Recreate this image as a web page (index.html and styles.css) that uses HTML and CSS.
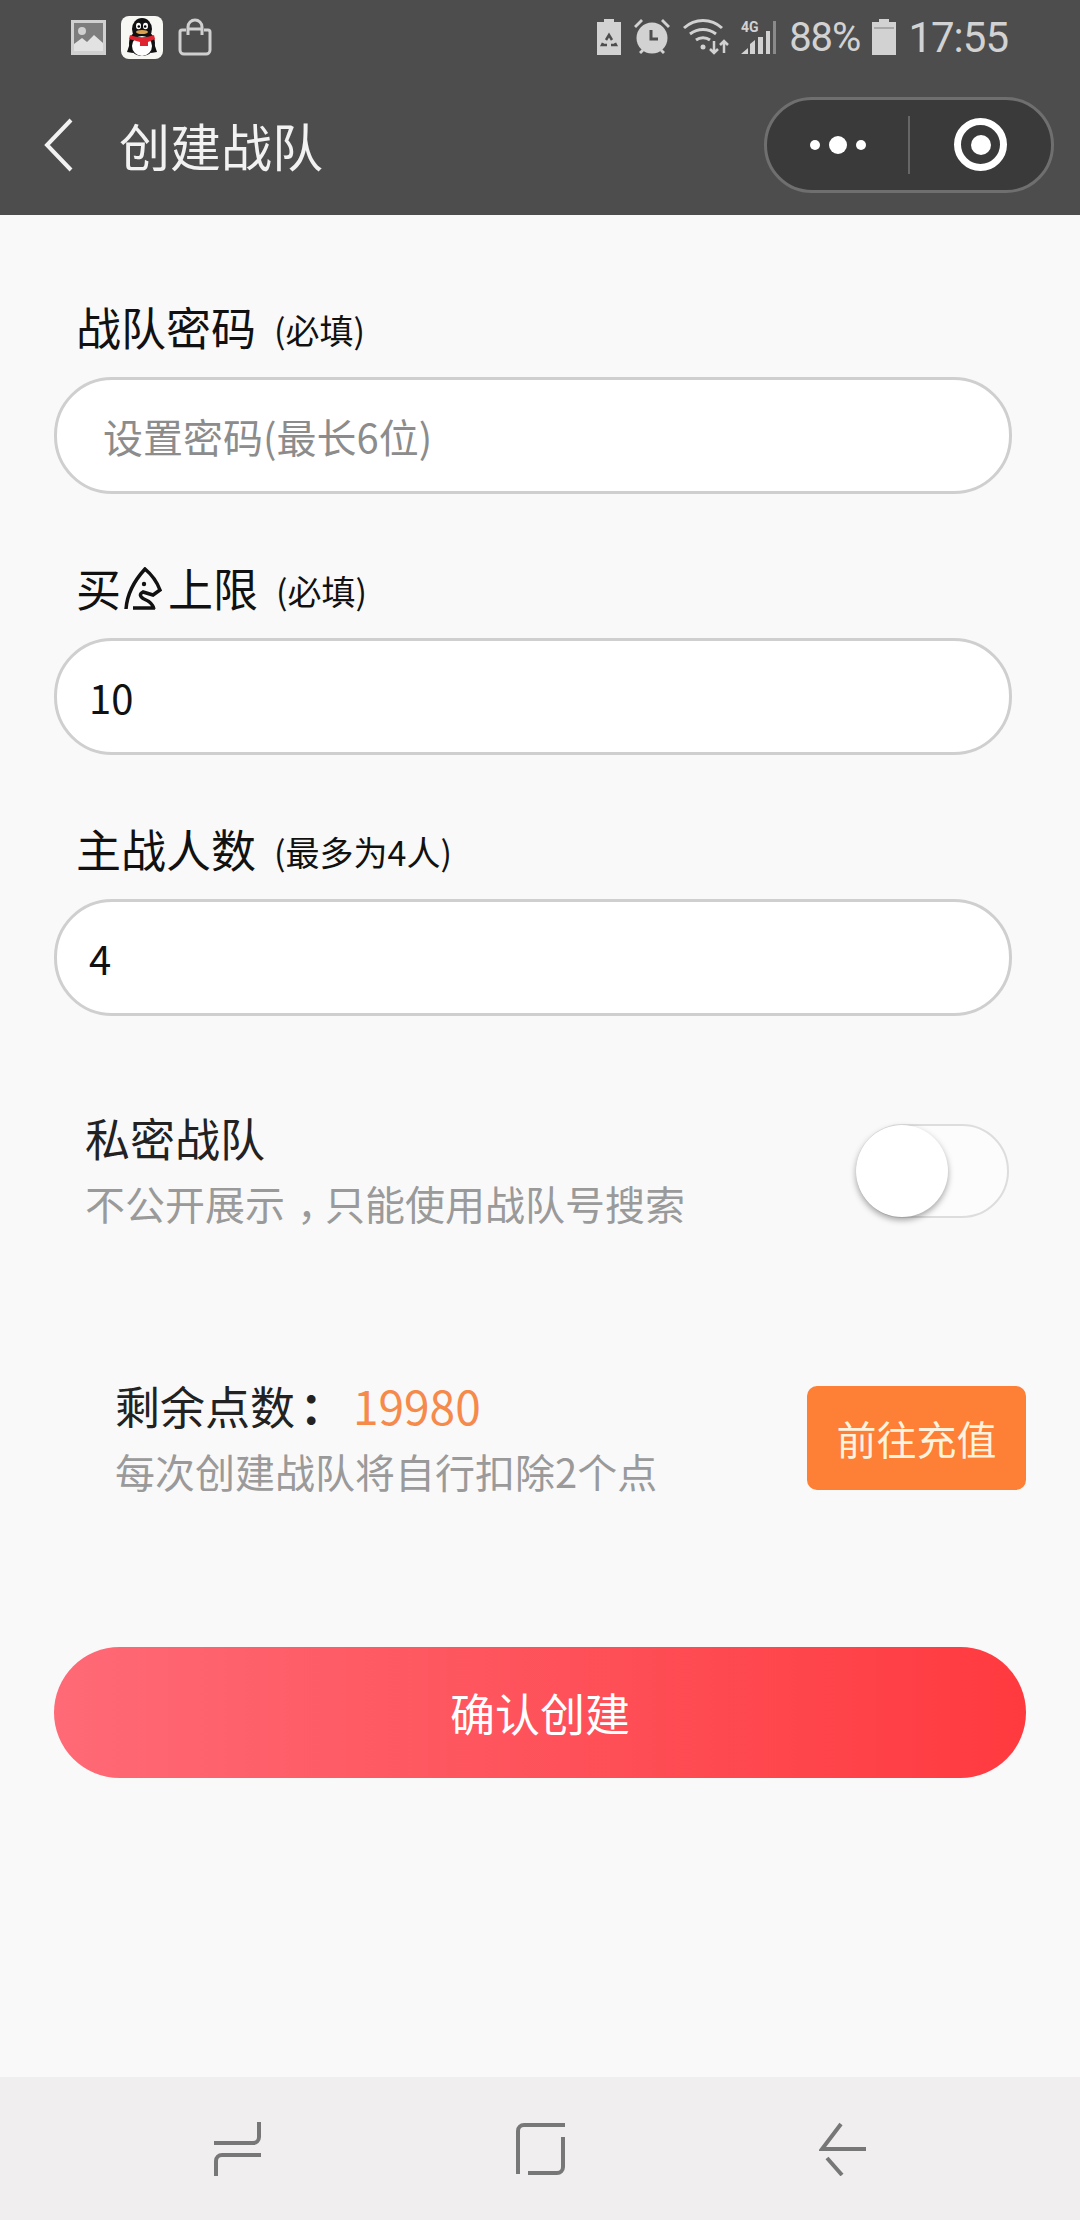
FILE: index.html
```html
<!DOCTYPE html>
<html lang="zh-CN">
<head>
    <meta charset="UTF-8">
    <meta name="viewport" content="width=device-width, initial-scale=1.0">
    <title>创建战队</title>
    <link rel="stylesheet" href="styles.css">
</head>
<body>
    <div class="page">
        <!-- Top bar -->
        <div class="topbar">
            <div class="status">
                <div class="status-left">
                    <svg width="35" height="35" viewBox="0 0 35 35"><path fill="#d0d0d0" d="M0 0h35v35H0z"/><path fill="#7d7d7d" d="M3 3h29v24H3z"/><circle cx="11" cy="11" r="4" fill="#d0d0d0"/><path fill="#e2e2e2" d="M3 31v-7l8-6 5 4 7-7 9 8v8z"/></svg>
                    <svg width="42" height="43" viewBox="0 0 42 43">
                        <rect width="42" height="43" rx="8" fill="#f7f7f3"/>
                        <ellipse cx="21" cy="27" rx="13" ry="13" fill="#111"/>
                        <path fill="#111" d="M6 36l4-12 2 13zM36 36l-4-12-2 13z"/>
                        <ellipse cx="21" cy="13" rx="10" ry="11" fill="#111"/>
                        <ellipse cx="21" cy="30" rx="10" ry="10" fill="#fff"/>
                        <ellipse cx="17.500" cy="10" rx="2.500" ry="3.300" fill="#fff"/>
                        <ellipse cx="24.500" cy="10" rx="2.500" ry="3.300" fill="#fff"/>
                        <circle cx="17.800" cy="10.500" r="1.300" fill="#000"/>
                        <circle cx="24.200" cy="10.500" r="1.300" fill="#000"/>
                        <ellipse cx="21" cy="16" rx="6" ry="2" fill="#d9a050"/>
                        <path fill="#e0242f" d="M9 19c8 3 16 3 24 0l1 4-7 3v4h-8v-4l-11-3z"/>
                    </svg>
                    <svg width="34" height="38" viewBox="0 0 34 38" fill="none" stroke="#cfcfcf" stroke-width="3"><path d="M8 12H4a2 2 0 0 0-2 2v18a4 4 0 0 0 4 4h22a4 4 0 0 0 4-4V14a2 2 0 0 0-2-2h-4"/><path d="M10 17V9a7 7 0 0 1 14 0v8M10 11h14"/></svg>
                </div>
                <div class="status-right">
                    <svg width="24" height="36" viewBox="0 0 24 36"><path fill="#d2d2d2" d="M7 0h10v3h7v33H0V3h7z"/><path fill="none" stroke="#4d4d4d" stroke-width="2.500" d="M9 21l3-5 3 5M6 24l-1 2h5M18 24l1 2h-5"/></svg>
                    <svg width="38" height="38" viewBox="0 0 38 38"><circle cx="19" cy="20" r="15.500" fill="#d2d2d2"/><path fill="#d2d2d2" d="M1 8l7-7 2 2-7 7zM37 8l-7-7-2 2 7 7zM6 34l3-3 2 2-3 3zM32 34l-3-3-2 2 3 3z"/><path fill="none" stroke="#4d4d4d" stroke-width="3" d="M18 12v9h7"/></svg>
                    <svg width="46" height="36" viewBox="0 0 46 36" fill="none" stroke="#d2d2d2" stroke-width="3"><path d="M1 9c11-10 27-10 38 0M7 15c8-6 18-6 26 0M13 21c4-3 10-3 14 0"/><circle cx="20" cy="28" r="2.500" fill="#d2d2d2" stroke="none"/><path stroke-width="2.500" d="M31 22v12M27 30l4 4 4-4M41 34V22M37 26l4-4 4 4"/></svg>
                    <svg width="36" height="36" viewBox="0 0 36 36"><text x="0" y="13" class="sig-text">4G</text><path fill="#d2d2d2" d="M0 35l7-6v6zM9 35V25l5-4v14zM17 35V18h5v17zM25 35V12h4v23z"/><path fill="#8a8a8a" d="M32 2h3v33h-3z"/></svg>
                    <span class="battery-text">88%</span>
                    <svg width="24" height="36" viewBox="0 0 24 36"><path fill="#d2d2d2" d="M7 0h10v3h7v33H0V3h7z"/><path fill="#a8a8a8" d="M2 8h20v2H2z"/></svg>
                    <span class="clock">17:55</span>
                </div>
            </div>
            <div class="navbar">
                <div class="nav-left">
                    <svg width="30" height="54" viewBox="0 0 30 54" fill="none" stroke="#f2f2f2" stroke-width="4"><path d="M27 2L3 27l24 25"/></svg>
                    <span class="nav-title">创建战队</span>
                </div>
                <div class="capsule">
                    <div class="capsule-dots"><i class="dot"></i><i class="dot big"></i><i class="dot"></i></div>
                    <div class="capsule-line"></div>
                    <div class="capsule-target"><i></i></div>
                </div>
            </div>
        </div>

        <!-- Form -->
        <div class="form">
            <div class="field">
                <div class="field-label">战队密码 <small>(必填)</small></div>
                <div class="field-input placeholder">设置密码(最长6位)</div>
            </div>
            <div class="field">
                <div class="field-label">买<svg class="knight" width="38" height="43" viewBox="0 0 38 43" fill="none" stroke="#111" stroke-width="3.500"><path d="M2 42C3 28 10 14 21 2c6 5 12 13 15 21l-7 5-10-3c-4 2-3 5 1 7 5 2 9 5 10 10M9 41h22"/><circle cx="20" cy="17" r="2.200" fill="#111" stroke="none"/></svg>上限 <small>(必填)</small></div>
                <div class="field-input">10</div>
            </div>
            <div class="field">
                <div class="field-label">主战人数 <small>(最多为4人)</small></div>
                <div class="field-input">4</div>
            </div>

            <div class="private-row">
                <div>
                    <div class="row-title">私密战队</div>
                    <div class="row-desc">不公开展示<span class="comma">，</span>只能使用战队号搜索</div>
                </div>
                <div class="switch"><div class="switch-knob"></div></div>
            </div>

            <div class="points-row">
                <div>
                    <div class="row-title">剩余点数<span class="colon">：</span><span class="points">19980</span></div>
                    <div class="row-desc">每次创建战队将自行扣除2个点</div>
                </div>
                <div class="btn-recharge">前往充值</div>
            </div>

            <div class="btn-confirm">确认创建</div>
        </div>

        <!-- Android nav -->
        <div class="android-nav">
            <svg width="47" height="54" viewBox="0 0 47 54" fill="none" stroke="#777" stroke-width="4"><path d="M45 0v15a6 6 0 0 1-6 6H0M47 33H8a6 6 0 0 0-6 6v15"/></svg>
            <svg width="49" height="52" viewBox="0 0 49 52" fill="none" stroke="#777" stroke-width="4"><path d="M2 51V8a6 6 0 0 1 6-6h41M47 14v30a6 6 0 0 1-6 6H12"/></svg>
            <svg width="47" height="54" viewBox="0 0 47 54" fill="none" stroke="#777" stroke-width="4"><path d="M22 2L3 27h44M8 36l15 17"/></svg>
        </div>
    </div>
</body>
</html>
```
FILE: styles.css
```css
* {
    box-sizing: border-box;
}
body {
    margin: 0;
    font-family: "Noto Sans CJK SC", "Noto Sans", sans-serif;
    background-color: #f9f9f9;
}
.page {
    width: 1080px;
    height: 2220px;
    display: flex;
    flex-direction: column;
    overflow: hidden;
}

/* Top bar */
.topbar {
    height: 215px;
    background-color: #4d4d4d;
    flex-shrink: 0;
}
.status {
    height: 74px;
    padding: 0 72px 0 71px;
    display: flex;
    justify-content: space-between;
    align-items: center;
}
.status-left,
.status-right {
    display: flex;
    align-items: center;
}
.status-left {
    gap: 15px;
}
.status-right {
    gap: 12px;
    font-family: Roboto, sans-serif;
    color: #d2d2d2;
}
.sig-text {
    font-family: Roboto, sans-serif;
    font-size: 14px;
    font-weight: 700;
    fill: #d2d2d2;
}
.battery-text {
    font-size: 40px;
    letter-spacing: -1px;
}
.clock {
    font-size: 42px;
    letter-spacing: -1px;
}
.navbar {
    height: 141px;
    padding: 0 26px 0 44px;
    display: flex;
    justify-content: space-between;
    align-items: center;
}
.nav-left {
    display: flex;
    align-items: center;
    gap: 45px;
}
.nav-title {
    font-size: 51px;
    color: #f2f2f2;
}
.capsule {
    width: 290px;
    height: 96px;
    border: 3px solid #6f6f6f;
    border-radius: 48px;
    background-color: #3a3a3a;
    display: flex;
    align-items: center;
}
.capsule-dots {
    width: 141px;
    display: flex;
    justify-content: center;
    align-items: center;
    gap: 9px;
}
.dot {
    width: 10px;
    height: 10px;
    border-radius: 50%;
    background-color: #fff;
}
.dot.big {
    width: 18px;
    height: 18px;
}
.capsule-line {
    width: 2px;
    height: 58px;
    background-color: #666;
}
.capsule-target {
    flex: 1;
    display: flex;
    justify-content: center;
}
.capsule-target i {
    width: 53px;
    height: 53px;
    border: 7px solid #fff;
    border-radius: 50%;
    display: flex;
    justify-content: center;
    align-items: center;
}
.capsule-target i::after {
    content: "";
    width: 20px;
    height: 20px;
    border-radius: 50%;
    background-color: #fff;
}

/* Form */
.form {
    flex: 1;
    padding: 82px 54px 0;
}
.field {
    width: 958px;
    margin-bottom: 64px;
}
.field-label {
    height: 60px;
    line-height: 60px;
    margin: 0 0 20px 22px;
    font-size: 45px;
    color: #111;
    display: flex;
    align-items: center;
}
.field-label small {
    font-size: 34px;
    margin-left: 18px;
    margin-top: 6px;
}
.knight {
    margin: 0 6px 0 3px;
}
.field-input {
    height: 117px;
    padding: 0 32px;
    border: 3px solid #cfcfcf;
    border-radius: 58px;
    background-color: #fff;
    font-size: 40px;
    color: #111;
    display: flex;
    align-items: center;
}
.placeholder {
    padding-left: 46px;
    color: #8c8c8c;
}
.private-row {
    margin-top: 92px;
    padding: 0 17px 0 31px;
    display: flex;
    justify-content: space-between;
    align-items: center;
}
.row-title {
    font-size: 45px;
    line-height: 60px;
    color: #222;
}
.row-desc {
    margin-top: 5px;
    font-size: 40px;
    line-height: 60px;
    color: #9a9a9a;
}
.comma {
    margin-left: 12px;
    letter-spacing: -12px;
}
.switch {
    width: 153px;
    height: 94px;
    border: 2px solid #ddd;
    border-radius: 47px;
    background-color: #fcfcfc;
}
.switch-knob {
    width: 92px;
    height: 92px;
    margin: -1px 0 0 -2px;
    border-radius: 50%;
    background-color: #fff;
    box-shadow: 0 3px 6px rgba(0, 0, 0, 0.35);
}
.points-row {
    margin-top: 142px;
    padding-left: 61px;
    display: flex;
    justify-content: space-between;
    align-items: center;
}
.colon {
    font-family: "Noto Sans CJK TC", sans-serif;
    font-weight: 700;
    margin-left: 5px;
}
.points {
    color: #f58a4a;
    font-size: 46px;
    margin-left: 8px;
}
.btn-recharge {
    width: 219px;
    height: 104px;
    border-radius: 10px;
    background-color: #fe7f36;
    color: #fff3dd;
    font-size: 40px;
    display: flex;
    justify-content: center;
    align-items: center;
}
.btn-confirm {
    width: 972px;
    height: 131px;
    margin-top: 146px;
    border-radius: 66px;
    background: linear-gradient(90deg, #fe6a76, #ff3a3f);
    color: #fff;
    font-size: 45px;
    display: flex;
    justify-content: center;
    align-items: center;
}

/* Android nav */
.android-nav {
    height: 143px;
    flex-shrink: 0;
    background-color: #f0eeef;
    padding: 0 214px;
    display: flex;
    justify-content: space-between;
    align-items: center;
}
```
